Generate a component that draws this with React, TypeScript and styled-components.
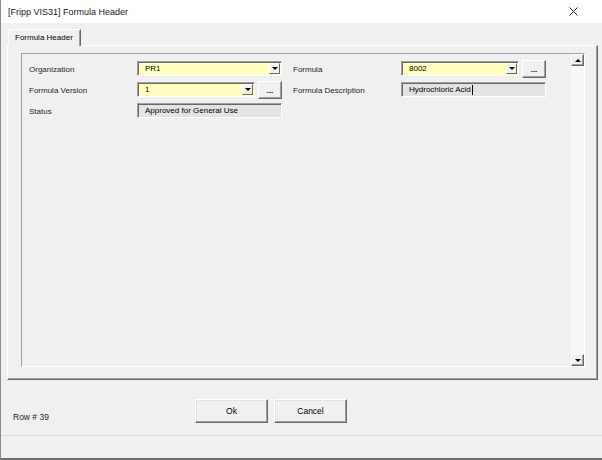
import styled, { createGlobalStyle } from "styled-components";

const GlobalStyle = createGlobalStyle`
    html, body {
        margin: 0;
        padding: 0;
        background: #ffffff;
    }
    * {
        box-sizing: border-box;
    }
`;

const Window = styled.div`
    width: 602px;
    height: 460px;
    display: flex;
    flex-direction: column;
    background-color: #f0f0f0;
    border-left: 1px solid #8c8c8c;
    border-bottom: 2px solid #6e6e6e;
    font-family: "Liberation Sans", Arial, sans-serif;
    font-size: 8px;
    color: #000000;
    overflow: hidden;
`;
const TitleBar = styled.div`
    height: 23px;
    flex: none;
    display: flex;
    align-items: center;
    justify-content: space-between;
    padding: 0 24px 0 7px;
    background-color: #ffffff;
    font-size: 9px;
    color: #1a1a1a;
`;
const Body = styled.div`
    flex: 1;
    display: flex;
    flex-direction: column;
    padding: 6px 4px 0 6px;
`;
const TabStrip = styled.div`
    display: flex;
    height: 16px;
    padding-left: 1px;
`;
const Tab = styled.div`
    width: 73px;
    height: 17px;
    padding: 3px 0 0 6px;
    background-color: #f0f0f0;
    border-top: 1px solid #ffffff;
    border-left: 1px solid #ffffff;
    border-right: 1px solid #696969;
    box-shadow: inset -1px 0 #a0a0a0;
    position: relative;
    z-index: 1;
`;
const TabPage = styled.div`
    height: 335px;
    padding: 7px 12px 12px 13px;
    border-top: 1px solid #ffffff;
    border-left: 1px solid #ffffff;
    border-right: 1px solid #696969;
    border-bottom: 1px solid #696969;
    box-shadow: inset -1px -1px #a0a0a0;
`;
const Frame = styled.div`
    height: 100%;
    display: flex;
    border-top: 1px solid #a0a0a0;
    border-left: 1px solid #a0a0a0;
    border-right: 1px solid #ffffff;
    border-bottom: 1px solid #ffffff;
`;
const Form = styled.div`
    flex: 1;
    display: grid;
    grid-template-columns: 108px 145px 11px 108px 145px;
    grid-auto-rows: 15px;
    row-gap: 6px;
    align-content: start;
    align-items: center;
    padding: 7px 0 0 7px;
`;
const Label = styled.div<{ $col: number }>`
    grid-column: ${(p) => p.$col};
    padding-top: 2px;
    color: #1e1e1e;
`;
const FieldRow = styled.div<{ $col: number }>`
    grid-column: ${(p) => p.$col};
    display: flex;
    align-items: center;
    gap: 3px;
    height: 15px;
`;
const Box = styled.div<{ $yellow?: boolean }>`
    flex: 1;
    height: 15px;
    display: flex;
    align-items: center;
    padding-left: 7px;
    background-color: ${(p) => (p.$yellow ? "#ffffbf" : "#e3e3e3")};
    border-top: 1px solid #a0a0a0;
    border-left: 1px solid #a0a0a0;
    border-right: 1px solid #ffffff;
    border-bottom: 1px solid #ffffff;
    box-shadow: inset 1px 1px #696969;
`;
const BoxText = styled.span`
    flex: 1;
`;
const Caret = styled.span`
    display: inline-block;
    width: 1px;
    height: 10px;
    margin-left: 1px;
    vertical-align: middle;
    background-color: #000000;
`;
const DropButton = styled.div`
    width: 11px;
    height: 11px;
    margin-right: 1px;
    display: flex;
    align-items: center;
    justify-content: center;
    background-color: #f0f0f0;
    border-top: 1px solid #ffffff;
    border-left: 1px solid #ffffff;
    border-right: 1px solid #696969;
    border-bottom: 1px solid #696969;
`;
const Arrow = styled.span<{ $up?: boolean }>`
    width: 0;
    height: 0;
    border-left: 3px solid transparent;
    border-right: 3px solid transparent;
    ${(p) =>
        p.$up ? "border-bottom: 3px solid #000000;" : "border-top: 3px solid #000000;"}
`;
const DotsButton = styled.div`
    width: 24px;
    height: 18px;
    flex: none;
    display: flex;
    align-items: flex-end;
    justify-content: center;
    padding-bottom: 3px;
    font-weight: bold;
    font-size: 8px;
    line-height: 8px;
    background-color: #f0f0f0;
    border-top: 1px solid #ffffff;
    border-left: 1px solid #ffffff;
    border-right: 1px solid #696969;
    border-bottom: 1px solid #696969;
    box-shadow: inset -1px -1px #a0a0a0;
`;
const ScrollBar = styled.div`
    width: 13px;
    display: flex;
    flex-direction: column;
    background-color: #f8f8f8;
`;
const ScrollButton = styled.div`
    width: 13px;
    height: 12px;
    display: flex;
    align-items: center;
    justify-content: center;
    background-color: #f0f0f0;
    border-top: 1px solid #ffffff;
    border-left: 1px solid #ffffff;
    border-right: 1px solid #696969;
    border-bottom: 1px solid #696969;
    box-shadow: inset -1px -1px #a0a0a0;
`;
const Track = styled.div`
    flex: 1;
`;
const Footer = styled.div`
    height: 55px;
    flex: none;
    display: grid;
    grid-template-columns: 182px auto;
    padding: 19px 0 0 6px;
`;
const RowLabel = styled.div`
    align-self: end;
    margin-bottom: 13px;
    font-size: 8.5px;
    color: #1e1e1e;
`;
const Buttons = styled.div`
    display: flex;
    gap: 6px;
    align-items: flex-start;
`;
const Button = styled.div`
    width: 73px;
    height: 24px;
    display: flex;
    align-items: center;
    justify-content: center;
    font-size: 8.5px;
    background-color: #f0f0f0;
    border-top: 1px solid #ffffff;
    border-left: 1px solid #ffffff;
    border-right: 1px solid #696969;
    border-bottom: 1px solid #696969;
    box-shadow: inset -1px -1px #a0a0a0, inset 1px 1px #e3e3e3;
`;
const StatusBar = styled.div`
    flex: 1;
    border-top: 1px solid #d9d9d9;
    margin-left: -1px;
`;

function Combo({ value }: { value: string }) {
    return (
        <Box $yellow>
            <BoxText>{value}</BoxText>
            <DropButton>
                <Arrow />
            </DropButton>
        </Box>
    );
}

function App() {
    return (
        <>
            <GlobalStyle />
            <Window>
                <TitleBar>
                    <span>[Fripp VIS31] Formula Header</span>
                    <svg width="9" height="9" viewBox="0 0 9 9">
                        <path d="M0.5 0.5 L8.5 8.5 M8.5 0.5 L0.5 8.5" stroke="#222" strokeWidth="1" />
                    </svg>
                </TitleBar>
                <Body>
                    <TabStrip>
                        <Tab>Formula Header</Tab>
                    </TabStrip>
                    <TabPage>
                        <Frame>
                            <Form>
                                <Label $col={1}>Organization</Label>
                                <FieldRow $col={2}>
                                    <Combo value="PR1" />
                                </FieldRow>
                                <Label $col={4}>Formula</Label>
                                <FieldRow $col={5}>
                                    <Combo value="8002" />
                                    <DotsButton>...</DotsButton>
                                </FieldRow>

                                <Label $col={1}>Formula Version</Label>
                                <FieldRow $col={2}>
                                    <Combo value="1" />
                                    <DotsButton>...</DotsButton>
                                </FieldRow>
                                <Label $col={4}>Formula Description</Label>
                                <FieldRow $col={5}>
                                    <Box>
                                        <BoxText>
                                            Hydrochloric Acid
                                            <Caret />
                                        </BoxText>
                                    </Box>
                                </FieldRow>

                                <Label $col={1}>Status</Label>
                                <FieldRow $col={2}>
                                    <Box>
                                        <BoxText>Approved for General Use</BoxText>
                                    </Box>
                                </FieldRow>
                            </Form>
                            <ScrollBar>
                                <ScrollButton>
                                    <Arrow $up />
                                </ScrollButton>
                                <Track />
                                <ScrollButton>
                                    <Arrow />
                                </ScrollButton>
                            </ScrollBar>
                        </Frame>
                    </TabPage>
                    <Footer>
                        <RowLabel>Row # 39</RowLabel>
                        <Buttons>
                            <Button>Ok</Button>
                            <Button>Cancel</Button>
                        </Buttons>
                    </Footer>
                </Body>
                <StatusBar />
            </Window>
        </>
    );
}

export default App;
